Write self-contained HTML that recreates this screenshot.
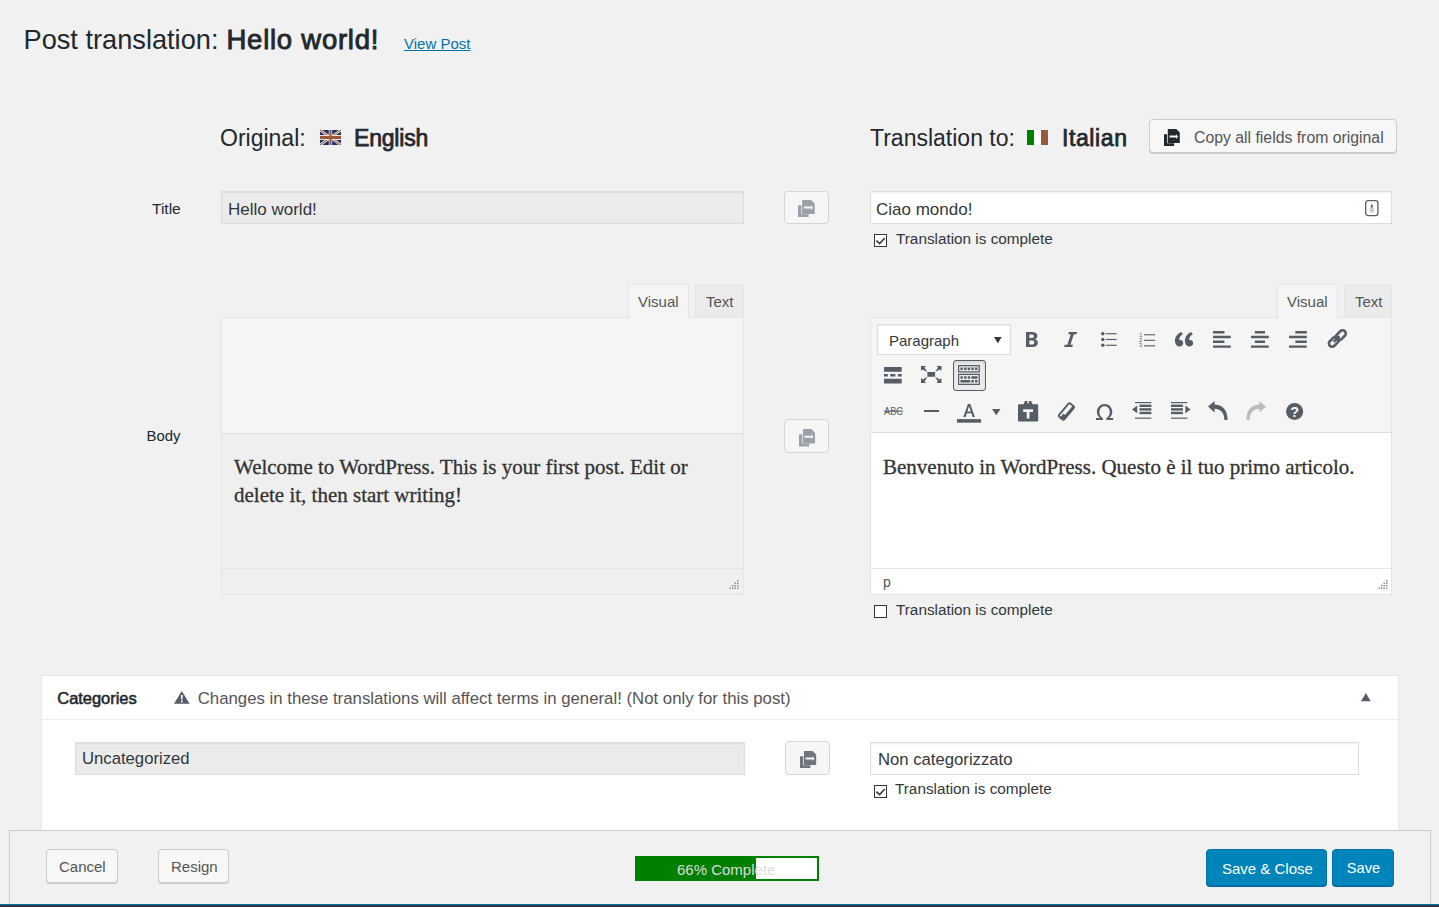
<!DOCTYPE html>
<html><head><meta charset="utf-8">
<style>
html,body{margin:0;padding:0;}
body{width:1439px;height:907px;overflow:hidden;background:#f1f1f1;position:relative;font-family:"Liberation Sans",sans-serif;color:#23282d;}
.a{position:absolute;}
.t{position:absolute;line-height:1;white-space:nowrap;}
.inp{position:absolute;box-sizing:border-box;border:1px solid #ddd;background:#fff;box-shadow:inset 0 1px 2px rgba(0,0,0,.07);}
.ro{background:#ebebeb;}
.cbtn{position:absolute;box-sizing:border-box;border:1px solid #d5d5d5;border-radius:4px;background:#f6f6f6;}
.cb{position:absolute;box-sizing:border-box;width:13px;height:13px;border:1px solid #32373c;background:#fff;}
.btn{position:absolute;box-sizing:border-box;border:1px solid #ccc;border-radius:4px;background:#f7f7f7;box-shadow:0 1px 0 #ccc;}
.pbtn{position:absolute;box-sizing:border-box;border:1px solid #0073aa;border-radius:4px;background:#0085ba;box-shadow:0 1px 0 #006799;}
</style></head>
<body>
<!-- heading -->
<div class="t" style="left:23.5px;top:25.7px;font-size:27.2px;color:#23282d">Post translation:</div>
<div class="t" style="left:226.5px;top:25.7px;font-size:27.5px;color:#23282d;letter-spacing:0.75px;-webkit-text-stroke:0.9px #23282d">Hello world!</div>
<div class="t" style="left:404px;top:36.3px;font-size:15px;color:#0073aa;text-decoration:underline">View Post</div>

<!-- column headers -->
<div class="t" style="left:220px;top:126.8px;font-size:23px;color:#23282d">Original:</div>
<div class="t" style="left:354px;top:126.8px;font-size:23px;color:#23282d;letter-spacing:-0.2px;-webkit-text-stroke:0.75px #23282d">English</div>

<div class="t" style="left:870px;top:126.8px;font-size:23px;color:#23282d">Translation to:</div>
<div class="t" style="left:1062px;top:126.8px;font-size:23px;color:#23282d;letter-spacing:0.6px;-webkit-text-stroke:0.75px #23282d">Italian</div>

<div class="btn" style="left:1149px;top:119px;width:248px;height:34px;"></div>
<div class="t" style="left:1194px;top:129.5px;font-size:15.8px;color:#555">Copy all fields from original</div>

<!-- title row -->
<div class="t" style="left:152px;top:201.2px;font-size:15.5px;color:#23282d">Title</div>
<div class="inp ro" style="left:221px;top:191px;width:523px;height:33px;"></div>
<div class="t" style="left:228px;top:200.6px;font-size:17px;color:#32373c">Hello world!</div>
<div class="cbtn" style="left:784px;top:191px;width:45px;height:33px;"></div>
<div class="inp" style="left:870px;top:191px;width:522px;height:33px;"></div>
<div class="t" style="left:876px;top:200.6px;font-size:17px;color:#32373c">Ciao mondo!</div>
<div class="cb" style="left:874px;top:234px;"><svg class="a" style="left:0;top:0;width:11px;height:11px" viewBox="0 0 11 11"><path d="M1.4 5.6L4.6 8.6L9.8 3" fill="none" stroke="#32373c" stroke-width="1.5"/></svg></div>
<div class="t" style="left:896px;top:230.6px;font-size:15.3px;color:#32373c">Translation is complete</div>

<!-- body row -->
<div class="t" style="left:146.5px;top:428.9px;font-size:14.9px;color:#23282d">Body</div>
<div class="cbtn" style="left:784px;top:419px;width:45px;height:34px;"></div>

<!-- left editor -->
<div class="a" style="left:221px;top:317px;width:523px;height:278px;box-sizing:border-box;border:1px solid #e5e5e5;background:#f5f5f5"></div>
<div class="a" style="left:695px;top:284px;width:49px;height:34px;box-sizing:border-box;border:1px solid #e5e5e5;background:#ebebeb"></div>
<div class="a" style="left:628px;top:284px;width:61px;height:34px;box-sizing:border-box;border:1px solid #e5e5e5;border-bottom:0;background:#f5f5f5"></div>
<div class="t" style="left:638px;top:294.3px;font-size:15px;color:#555">Visual</div>
<div class="t" style="left:706px;top:294.3px;font-size:15px;color:#555">Text</div>
<div class="a" style="left:222px;top:433px;width:521px;height:135px;border-top:1px solid #ddd;background:#efefef"></div>
<div class="a" style="left:222px;top:568px;width:521px;height:25px;border-top:1px solid #e5e5e5;background:#efefef"></div>
<div class="a" style="left:234px;top:452.9px;width:500px;font-family:'Liberation Serif',serif;font-size:21px;line-height:28px;color:#333;-webkit-text-stroke:0.3px #333">Welcome to WordPress. This is your first post. Edit or delete it, then start writing!</div>

<!-- right editor -->
<div class="a" style="left:870px;top:317px;width:522px;height:278px;box-sizing:border-box;border:1px solid #e5e5e5;background:#f5f5f5"></div>
<div class="a" style="left:1344px;top:284px;width:48px;height:34px;box-sizing:border-box;border:1px solid #e5e5e5;background:#ebebeb"></div>
<div class="a" style="left:1277px;top:284px;width:61px;height:34px;box-sizing:border-box;border:1px solid #e5e5e5;border-bottom:0;background:#f5f5f5"></div>
<div class="t" style="left:1287px;top:294.3px;font-size:15px;color:#555">Visual</div>
<div class="t" style="left:1355px;top:294.3px;font-size:15px;color:#555">Text</div>
<div class="a" style="left:871px;top:432px;width:520px;height:136px;border-top:1px solid #ddd;background:#fff"></div>
<div class="a" style="left:871px;top:568px;width:520px;height:25px;border-top:1px solid #e5e5e5;background:#fff"></div>
<div class="a" style="left:877px;top:324px;width:134px;height:31px;box-sizing:border-box;border:1px solid #ddd;background:#fff;box-shadow:inset 0 1px 2px rgba(0,0,0,.07)"></div>
<div class="t" style="left:889px;top:333px;font-size:15px;color:#32373c">Paragraph</div>
<div class="a" style="left:883px;top:452.9px;width:500px;font-family:'Liberation Serif',serif;font-size:21px;line-height:28px;color:#333;-webkit-text-stroke:0.3px #333">Benvenuto in WordPress. Questo è il tuo primo articolo.</div>
<div class="t" style="left:883px;top:575px;font-size:14px;color:#555">p</div>
<div class="cb" style="left:874px;top:605px;"></div>
<div class="t" style="left:896px;top:601.6px;font-size:15.3px;color:#32373c">Translation is complete</div>

<!-- categories panel -->
<div class="a" style="left:41px;top:675px;width:1358px;height:240px;box-sizing:border-box;border:1px solid #e5e5e5;background:#fff"></div>
<div class="a" style="left:42px;top:719px;width:1356px;height:1px;background:#eee"></div>
<div class="t" style="left:57.3px;top:690px;font-size:16.5px;color:#23282d;letter-spacing:-0.05px;-webkit-text-stroke:0.55px #23282d">Categories</div>
<div class="t" style="left:197.7px;top:691.2px;font-size:16.8px;color:#555">Changes in these translations will affect terms in general! (Not only for this post)</div>
<div class="inp ro" style="left:75px;top:742px;width:670px;height:33px;"></div>
<div class="t" style="left:82px;top:751.2px;font-size:16.7px;color:#32373c">Uncategorized</div>
<div class="cbtn" style="left:785px;top:741px;width:45px;height:34px;"></div>
<div class="inp" style="left:870px;top:742px;width:489px;height:33px;"></div>
<div class="t" style="left:878px;top:751.5px;font-size:16.7px;color:#32373c">Non categorizzato</div>
<div class="cb" style="left:874px;top:785px;"><svg class="a" style="left:0;top:0;width:11px;height:11px" viewBox="0 0 11 11"><path d="M1.4 5.6L4.6 8.6L9.8 3" fill="none" stroke="#32373c" stroke-width="1.5"/></svg></div>
<div class="t" style="left:895px;top:781.2px;font-size:15.3px;color:#32373c">Translation is complete</div>

<!-- footer -->
<div class="a" style="left:9px;top:830px;width:1422px;height:75px;box-sizing:border-box;border:1px solid #ccc;border-bottom:0;background:#f1f1f1"></div>
<div class="a" style="left:0;top:904px;width:1439px;height:1px;background:#0073aa"></div>
<div class="a" style="left:0;top:905px;width:1439px;height:2px;background:#32373c"></div>
<div class="btn" style="left:46px;top:849px;width:72px;height:34px;"></div>
<div class="t" style="left:59px;top:859px;font-size:15px;color:#555">Cancel</div>
<div class="btn" style="left:158px;top:849px;width:71px;height:34px;"></div>
<div class="t" style="left:171px;top:859px;font-size:15px;color:#555">Resign</div>
<div class="a" style="left:635px;top:856px;width:184px;height:25px;box-sizing:border-box;border:2px solid #008000;background:#fff"></div>
<div class="a" style="left:635px;top:856px;width:121px;height:25px;background:#008000"></div>
<div class="t" style="left:677px;top:861.7px;font-size:15px;color:#ddd">66% Complete</div>
<div class="pbtn" style="left:1206px;top:849px;width:121px;height:37px;"></div>
<div class="t" style="left:1222px;top:860.7px;font-size:15px;color:#fff">Save &amp; Close</div>
<div class="pbtn" style="left:1332px;top:849px;width:62px;height:37px;"></div>
<div class="t" style="left:1346.8px;top:861.2px;font-size:14.6px;color:#fff">Save</div>
<!--ICONS-->
<svg class="a" style="left:1026.3px;top:331.9px;width:11.8px;height:15.1px;overflow:visible" viewBox="6 4 9 13" preserveAspectRatio="none" fill="#555d66"><path d="M6 4v13h4.54c1.37 0 2.46-.33 3.26-1 .8-.66 1.2-1.58 1.2-2.77 0-.84-.17-1.51-.51-2.01s-.9-.85-1.67-1.03v-.09c.57-.1 1.02-.4 1.36-.9s.51-1.130.51-1.91c0-1.14-.39-1.98-1.17-2.5C12.75 4.26 11.5 4 9.78 4H6zm2.57 5.15V6.26h1.36c.73 0 1.27.11 1.61.32.34.22.51.58.51 1.07 0 .54-.16.92-.47 1.15s-.82.35-1.510.35h-1.5zm0 2.19h1.6c1.44 0 2.16.53 2.16 1.61 0 .6-.17 1.05-.51 1.34s-.86.43-1.57.43H8.57v-3.38z"/></svg>
<svg class="a" style="left:1063.5px;top:331.9px;width:13.2px;height:15.1px;overflow:visible" viewBox="4.6 4 10.8 13" preserveAspectRatio="none" fill="#555d66"><path d="M15.4 4l-.62 2h-2.13l-2.8 9h2.12l-.62 2H4.6l.62-2h2.14l2.8-9H8.03l.62-2z"/></svg>
<svg class="a" style="left:1101px;top:332px;width:15.7px;height:15px;overflow:visible" viewBox="4 4 13 13" preserveAspectRatio="none" fill="#555d66"><circle cx="5.5" cy="5.5" r="1.5"/><circle cx="5.5" cy="10.5" r="1.5"/><circle cx="5.5" cy="15.5" r="1.5"/><rect x="8" y="5" width="9" height="1"/><rect x="8" y="10" width="9" height="1"/><rect x="8" y="15" width="9" height="1"/></svg>
<svg class="a" style="left:1138.6px;top:331.5px;width:16.1px;height:15.5px;overflow:visible" viewBox="4 3 13 14" preserveAspectRatio="none" fill="#555d66"><text x="4.3" y="7.2" font-size="4.6" font-family="Liberation Sans">1</text><text x="4.1" y="12.1" font-size="4.6" font-family="Liberation Sans">2</text><text x="4.1" y="17" font-size="4.6" font-family="Liberation Sans">3</text><rect x="8" y="5" width="9" height="1"/><rect x="8" y="10" width="9" height="1"/><rect x="8" y="15" width="9" height="1"/></svg>
<svg class="a" style="left:1175.3px;top:331.9px;width:18.1px;height:14.5px;overflow:visible" viewBox="2.9 4 14.64 12" preserveAspectRatio="none" fill="#555d66"><path d="M9.49 13.22c0-.74-.2-1.38-.61-1.9-.62-.78-1.83-.88-2.53-.72-.29-1.65 1.11-3.750 2.92-4.65L7.88 4c-2.73 1.3-5.42 4.28-4.96 8.05C3.21 14.43 4.59 16 6.54 16c.85 0 1.56-.25 2.12-.75s.83-1.18.83-2.03zm8.05 0c0-.74-.2-1.38-.61-1.9-.63-.78-1.83-.88-2.53-.72-.29-1.65 1.11-3.75 2.92-4.65L15.93 4c-2.73 1.3-5.41 4.28-4.95 8.05.29 2.38 1.66 3.950 3.61 3.95.85 0 1.56-.25 2.11-.75.56-.5.84-1.18.84-2.03z"/></svg>
<svg class="a" style="left:1213.2px;top:330.6px;width:17.8px;height:16.8px;overflow:visible" viewBox="3 3 14 14" preserveAspectRatio="none" fill="#555d66"><path d="M12 5V3H3v2h9zm5 4V7H3v2h14zm-5 4v-2H3v2h9zm5 4v-2H3v2h14z"/></svg>
<svg class="a" style="left:1251.2px;top:330.6px;width:17.8px;height:16.8px;overflow:visible" viewBox="3 3 14 14" preserveAspectRatio="none" fill="#555d66"><path d="M14 5V3H6v2h8zm3 4V7H3v2h14zm-3 4v-2H6v2h8zm3 4v-2H3v2h14z"/></svg>
<svg class="a" style="left:1289.2px;top:330.6px;width:17.8px;height:16.8px;overflow:visible" viewBox="3 3 14 14" preserveAspectRatio="none" fill="#555d66"><path d="M17 5V3H8v2h9zm0 4V7H3v2h14zm0 4v-2H8v2h9zm0 4v-2H3v2h14z"/></svg>
<svg class="a" style="left:1326.2px;top:328.6px;width:21.1px;height:20.5px;overflow:visible" viewBox="0 0 21 20.5" preserveAspectRatio="none" fill="#555d66"><g fill="none" stroke="#555d66" stroke-width="2.6"><rect x="-4.2" y="-3.2" width="11.5" height="6.4" rx="3.2" transform="translate(6.8 13.8) rotate(-45)"/><rect x="-5.2" y="-3.2" width="11.5" height="6.4" rx="3.2" transform="translate(14.3 6.7) rotate(-45)"/><path d="M7.6 12.9 L13.4 7.1"/></g></svg>
<svg class="a" style="left:884.4px;top:366.7px;width:17.7px;height:16.5px;overflow:visible" viewBox="3 3 14 14" preserveAspectRatio="none" fill="#555d66"><path d="M17 7V3H3v4h14zM6 11V9H3v2h3zm6 0V9H8v2h4zm5 0V9h-3v2h3zm0 6v-4H3v4h14z"/></svg>
<svg class="a" style="left:921px;top:366.3px;width:20.5px;height:16.9px;overflow:visible" viewBox="2 3 16 14" preserveAspectRatio="none" fill="#555d66"><path d="M7 8h6v4H7zM2 13v4h4l-1.2-1.2L7 12l-3.8 2.2zM14 17h4v-4l-1.2 1.2L13 12l2.2 3.8zM14 3l1.3 1.3L13 8l3.8-2.2L18 7V3zM6 3H2v4l1.2-1.2L7 8 4.7 4.3z"/></svg>
<div class="a" style="left:953px;top:360px;width:33px;height:31px;box-sizing:border-box;border:1px solid #555d66;border-radius:3px;background:#ebebeb;box-shadow:inset 0 2px 5px -3px rgba(0,0,0,.3)"></div>
<svg class="a" style="left:958.2px;top:365px;width:21.9px;height:20px;overflow:visible" viewBox="1 2 18 16" preserveAspectRatio="none" fill="#555d66"><path d="M19 2v6H1V2h18zm-1 5V3H2v4h16zM5 4v2H3V4h2zm3 0v2H6V4h2zm3 0v2H9V4h2zm3 0v2h-2V4h2zm3 0v2h-2V4h2zm2 5v9H1V9h18zm-1 8v-7H2v7h16zM5 11v2H3v-2h2zm3 0v2H6v-2h2zm3 0v2H9v-2h2zm6 0v2h-5v-2h5zm-6 3v2H3v-2h8zm3 0v2h-2v-2h2zm3 0v2h-2v-2h2z"/></svg>
<svg class="a" style="left:883.5px;top:407px;width:18.9px;height:8.1px;overflow:visible" viewBox="0 0 18.9 8.1" preserveAspectRatio="none" fill="#555d66"><text x="9.45" y="8" text-anchor="middle" font-size="10.8" font-family="Liberation Sans" textLength="18.9" lengthAdjust="spacingAndGlyphs">ABC</text><rect x="0" y="3.6" width="18.9" height="1.1"/></svg>
<div class="a" style="left:924px;top:409.5px;width:15px;height:2.6px;background:#555d66"></div>
<svg class="a" style="left:957px;top:404px;width:24.1px;height:18.7px;overflow:visible" viewBox="0 0 24.1 18.7" preserveAspectRatio="none" fill="#555d66"><path d="M6.3 12.9 L10.9 0 H13.3 L17.9 12.9 H15.6 L14.4 9.3 H9.8 L8.6 12.9 Z M10.4 7.5 H13.8 L12.1 2.3 Z" fill-rule="evenodd"/><rect x="0" y="15.1" width="24.1" height="3.6"/></svg>
<svg class="a" style="left:991.8px;top:408.9px;width:8.5px;height:6.2px;overflow:visible" viewBox="0 0 8.5 6.2" preserveAspectRatio="none" fill="#555d66"><path d="M0 0H8.5L4.25 6.2z"/></svg>
<svg class="a" style="left:1018px;top:400.8px;width:20.2px;height:20.5px;overflow:visible" viewBox="0 0 20.2 20.5" preserveAspectRatio="none" fill="#555d66"><path fill-rule="evenodd" d="M7 0H13.2L14.6 3.2H19.2Q20.2 3.2 20.2 4.2V19.5Q20.2 20.5 19.2 20.5H1Q0 20.5 0 19.5V4.2Q0 3.2 1 3.2H5.6Z M9 1.3 A1.1 1.1 0 1 0 11.2 1.3 A1.1 1.1 0 1 0 9 1.3Z M5.2 8.2H15V11H11.5V17.4H8.7V11H5.2Z"/></svg>
<svg class="a" style="left:1057.5px;top:402px;width:16.8px;height:19px;overflow:visible" viewBox="0 0 16.8 19" preserveAspectRatio="none" fill="#555d66"><g transform="translate(8.4 9.5) rotate(-50)"><rect x="-8.6" y="-3.4" width="17.2" height="6.8" rx="1.6" fill="none" stroke="#555d66" stroke-width="1.9"/><rect x="-8.6" y="1.2" width="17.2" height="2.2"/><path d="M-8.6 -1H-3.4V3.4H-7A1.6 1.6 0 0 1 -8.6 1.8Z"/></g></svg>
<svg class="a" style="left:1095.6px;top:403.6px;width:17.2px;height:16.1px;overflow:visible" viewBox="0 0 17.2 16.1" preserveAspectRatio="none" fill="#555d66"><path d="M0 16.1V14H4.1C1.9 12.5 0.9 10.5 0.9 8C0.9 3.3 4.3 0 8.6 0S16.3 3.3 16.3 8C16.3 10.5 15.3 12.5 13.1 14H17.2V16.1H10.3V14.2C12.6 13 13.8 10.9 13.8 8.1C13.8 4.8 11.8 2.2 8.6 2.2S3.4 4.8 3.4 8.1C3.4 10.9 4.6 13 6.9 14.2V16.1Z"/></svg>
<svg class="a" style="left:1131.6px;top:402px;width:19.4px;height:17.2px;overflow:visible" viewBox="0 0 19.4 17.2" preserveAspectRatio="none" fill="#555d66"><rect x="3" y="0" width="16.4" height="1.2"/><rect x="7.5" y="2.6" width="11.9" height="2.4"/><rect x="7.5" y="6.2" width="11.9" height="2.4"/><rect x="7.5" y="9.8" width="11.9" height="2.4"/><rect x="3" y="15.6" width="16.4" height="1.2"/><path d="M0 7.4L5.2 3.6V11.2z"/></svg>
<svg class="a" style="left:1171px;top:402px;width:19.6px;height:17.2px;overflow:visible" viewBox="0 0 19.6 17.2" preserveAspectRatio="none" fill="#555d66"><rect x="0" y="0" width="16.4" height="1.2"/><rect x="0" y="2.6" width="11.9" height="2.4"/><rect x="0" y="6.2" width="11.9" height="2.4"/><rect x="0" y="9.8" width="11.9" height="2.4"/><rect x="0" y="15.6" width="16.4" height="1.2"/><path d="M19.6 7.4L14.4 3.6V11.2z"/></svg>
<svg class="a" style="left:1208.4px;top:401px;width:19.6px;height:19px;overflow:visible" viewBox="0 0 19.6 19" preserveAspectRatio="none" fill="#555d66"><path d="M0 5.6L6.6 0V3.6C13.6 3.6 19.6 8.4 19.6 19H16.4C16.4 11.8 12.4 7.8 6.6 7.8V11.4Z"/></svg>
<svg class="a" style="left:1246px;top:401px;width:20px;height:19px;overflow:visible" viewBox="0 0 20 19" preserveAspectRatio="none" fill="#b8bcc0"><path d="M20 5.6L13.4 0V3.6C6.4 3.6 0.4 8.4 0.4 19H3.6C3.6 11.8 7.6 7.8 13.4 7.8V11.4Z"/></svg>
<svg class="a" style="left:1285.8px;top:402.8px;width:17.2px;height:16.9px;overflow:visible" viewBox="0 0 17.2 16.9" preserveAspectRatio="none" fill="#555d66"><ellipse cx="8.6" cy="8.45" rx="8.6" ry="8.45"/><text x="8.7" y="13.6" text-anchor="middle" font-size="14.5" font-weight="bold" font-family="Liberation Sans" fill="#f5f5f5">?</text></svg>
<svg class="a" style="left:994px;top:336.7px;width:7.7px;height:6.3px;overflow:visible" viewBox="0 0 7.7 6.3" preserveAspectRatio="none" fill="#32373c"><path d="M0 0H7.7L3.85 6.3z"/></svg>
<svg class="a" style="left:1163.9px;top:128.8px;width:15.8px;height:17px;overflow:visible" viewBox="0 0 16 17" preserveAspectRatio="none" fill="#23282d"><path d="M0 5.2H3.2V14.2H10.2V17H0Z"/><path fill-rule="evenodd" d="M3.9 0H12.4L16 3.6V14H3.9Z M5.6 6.6H12.4V5.2L14.3 7.6L12.4 10V8.6H5.6Z"/></svg>
<svg class="a" style="left:798.3px;top:200px;width:16.7px;height:17px;overflow:visible" viewBox="0 0 16 17" preserveAspectRatio="none" fill="#9aa1a8"><path d="M0 5.2H3.2V14.2H10.2V17H0Z"/><path fill-rule="evenodd" d="M3.9 0H12.4L16 3.6V14H3.9Z M5.6 6.6H12.4V5.2L14.3 7.6L12.4 10V8.6H5.6Z"/></svg>
<svg class="a" style="left:798.9px;top:428.7px;width:16px;height:17.5px;overflow:visible" viewBox="0 0 16 17" preserveAspectRatio="none" fill="#9aa1a8"><path d="M0 5.2H3.2V14.2H10.2V17H0Z"/><path fill-rule="evenodd" d="M3.9 0H12.4L16 3.6V14H3.9Z M5.6 6.6H12.4V5.2L14.3 7.6L12.4 10V8.6H5.6Z"/></svg>
<svg class="a" style="left:799.6px;top:751px;width:16.2px;height:17px;overflow:visible" viewBox="0 0 16 17" preserveAspectRatio="none" fill="#6e757c"><path d="M0 5.2H3.2V14.2H10.2V17H0Z"/><path fill-rule="evenodd" d="M3.9 0H12.4L16 3.6V14H3.9Z M5.6 6.6H12.4V5.2L14.3 7.6L12.4 10V8.6H5.6Z"/></svg>
<svg class="a" style="left:1364.7px;top:199.8px;width:13.6px;height:16.2px;overflow:visible" viewBox="0 0 13.6 16.2" preserveAspectRatio="none" fill="none"><rect x="0.65" y="0.65" width="12.3" height="14.9" rx="2.4" fill="none" stroke="#56606a" stroke-width="1.3"/><path d="M6.8 3.4L8.2 7.6H5.4Z" fill="#4a5560"/><rect x="4.6" y="7.8" width="4.4" height="4.6" fill="#cfcfcf"/></svg>
<svg class="a" style="left:173.75px;top:691px;width:15.65px;height:12.75px;overflow:visible" viewBox="0 0 15.65 12.75" preserveAspectRatio="none" fill="#555d66"><path fill-rule="evenodd" d="M7.8 0L15.65 12.75H0Z M7 4H8.7L8.5 8.6H7.2Z M7 9.6H8.7V11.2H7Z"/></svg>
<svg class="a" style="left:1361px;top:692.7px;width:9.7px;height:8.2px;overflow:visible" viewBox="0 0 9.7 8.2" preserveAspectRatio="none" fill="#555d66"><path d="M4.85 0L9.7 8.2H0Z"/></svg>
<svg class="a" style="left:1376px;top:579.5px;width:12px;height:10px;overflow:visible" viewBox="0 0 12 10" preserveAspectRatio="none" fill="#7a7f85"><rect x="10.0" y="0.0" width="1.4" height="1.4"/><rect x="7.5" y="2.5" width="1.4" height="1.4"/><rect x="10.0" y="2.5" width="1.4" height="1.4"/><rect x="5.0" y="5.0" width="1.4" height="1.4"/><rect x="7.5" y="5.0" width="1.4" height="1.4"/><rect x="10.0" y="5.0" width="1.4" height="1.4"/><rect x="2.5" y="7.5" width="1.4" height="1.4"/><rect x="5.0" y="7.5" width="1.4" height="1.4"/><rect x="7.5" y="7.5" width="1.4" height="1.4"/><rect x="10.0" y="7.5" width="1.4" height="1.4"/></svg>
<svg class="a" style="left:727px;top:579.5px;width:12px;height:10px;overflow:visible" viewBox="0 0 12 10" preserveAspectRatio="none" fill="#7a7f85"><rect x="10.0" y="0.0" width="1.4" height="1.4"/><rect x="7.5" y="2.5" width="1.4" height="1.4"/><rect x="10.0" y="2.5" width="1.4" height="1.4"/><rect x="5.0" y="5.0" width="1.4" height="1.4"/><rect x="7.5" y="5.0" width="1.4" height="1.4"/><rect x="10.0" y="5.0" width="1.4" height="1.4"/><rect x="2.5" y="7.5" width="1.4" height="1.4"/><rect x="5.0" y="7.5" width="1.4" height="1.4"/><rect x="7.5" y="7.5" width="1.4" height="1.4"/><rect x="10.0" y="7.5" width="1.4" height="1.4"/></svg>
<svg class="a" style="left:320px;top:130px;width:21px;height:15px;overflow:visible" viewBox="0 0 60 30" preserveAspectRatio="none" fill="none"><rect width="60" height="30" fill="#15307a"/><path d="M0 0L60 30M60 0L0 30" stroke="#f0e6dc" stroke-width="6"/><path d="M0 0L60 30M60 0L0 30" stroke="#b06a40" stroke-width="2.5"/><path d="M30 0V30M0 15H60" stroke="#f0e0d0" stroke-width="10"/><path d="M30 0V30M0 15H60" stroke="#9a5a3a" stroke-width="6"/></svg>
<div class="a" style="left:1027px;top:130px;width:7px;height:15px;background:#008000"></div><div class="a" style="left:1034px;top:130px;width:7px;height:15px;background:#fff"></div><div class="a" style="left:1041px;top:130px;width:7px;height:15px;background:#945a3e"></div>
<!--/ICONS-->
</body></html>
